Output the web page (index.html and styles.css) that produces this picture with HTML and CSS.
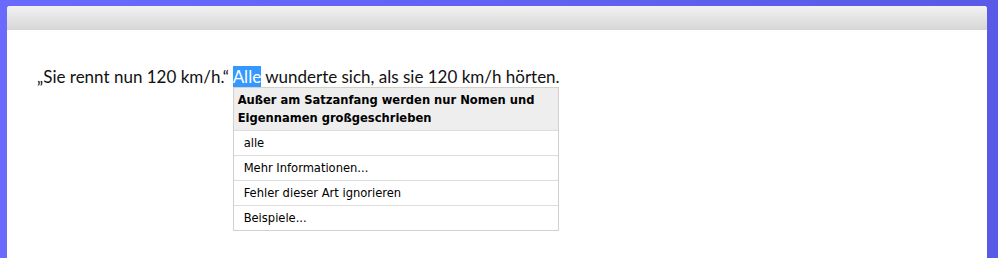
FILE: index.html
```html
<!DOCTYPE html>
<html lang="de">
<head>
  <meta charset="UTF-8">
  <title>Rechtschreibprüfung</title>
  <link rel="stylesheet" href="styles.css">
</head>
<body>
  <div class="panel">
    <div class="toolbar"></div>
    <div class="editor">
      <p class="sentence">„Sie rennt nun 120 km/h.“ <span class="marked">Alle<span class="popup">
        <span class="popup-title">Außer am Satzanfang werden nur Nomen und Eigennamen großgeschrieben</span>
        <span class="popup-item">alle</span>
        <span class="popup-item">Mehr Informationen...</span>
        <span class="popup-item">Fehler dieser Art ignorieren</span>
        <span class="popup-item">Beispiele...</span>
      </span></span> wunderte sich, als sie 120 km/h hörten.</p>
    </div>
  </div>
</body>
</html>
```

FILE: styles.css
```css
* {
  margin: 0;
  padding: 0;
  box-sizing: border-box;
}

body {
  height: 258px;
  overflow: hidden;
  background: linear-gradient(to right, #6a6aff, #5a5ae8);
  padding: 6px 11px 0 7px;
}

.panel {
  height: 252px;
  background-color: #fff;
  border-radius: 3px 3px 0 0;
}

.toolbar {
  height: 24px;
  border-radius: 3px 3px 0 0;
  background: linear-gradient(to bottom, #f2f2f2, #d6d6d6);
}

.editor {
  padding: 36px 30px 0 30px;
}

.sentence {
  font-family: "Lato", "Open Sans", sans-serif;
  font-size: 17px;
  line-height: 22px;
  color: #111;
}

.marked {
  position: relative;
  background-color: #3399ff;
  color: #fff;
}

.popup {
  position: absolute;
  left: 0;
  top: 21px;
  width: 326px;
  display: flex;
  flex-direction: column;
  border: 1px solid #d6d0c8;
  background-color: #fff;
  font-family: "DejaVu Sans Condensed", "DejaVu Sans", sans-serif;
  font-size: 12.8px;
  color: #000;
}

.popup-title {
  background-color: #eeeeee;
  font-weight: bold;
  padding: 3px 4px 3px 4px;
  line-height: 18px;
}

.popup-item {
  height: 25px;
  line-height: 24px;
  padding-left: 10px;
  border-top: 1px solid #dddddd;
}
```
